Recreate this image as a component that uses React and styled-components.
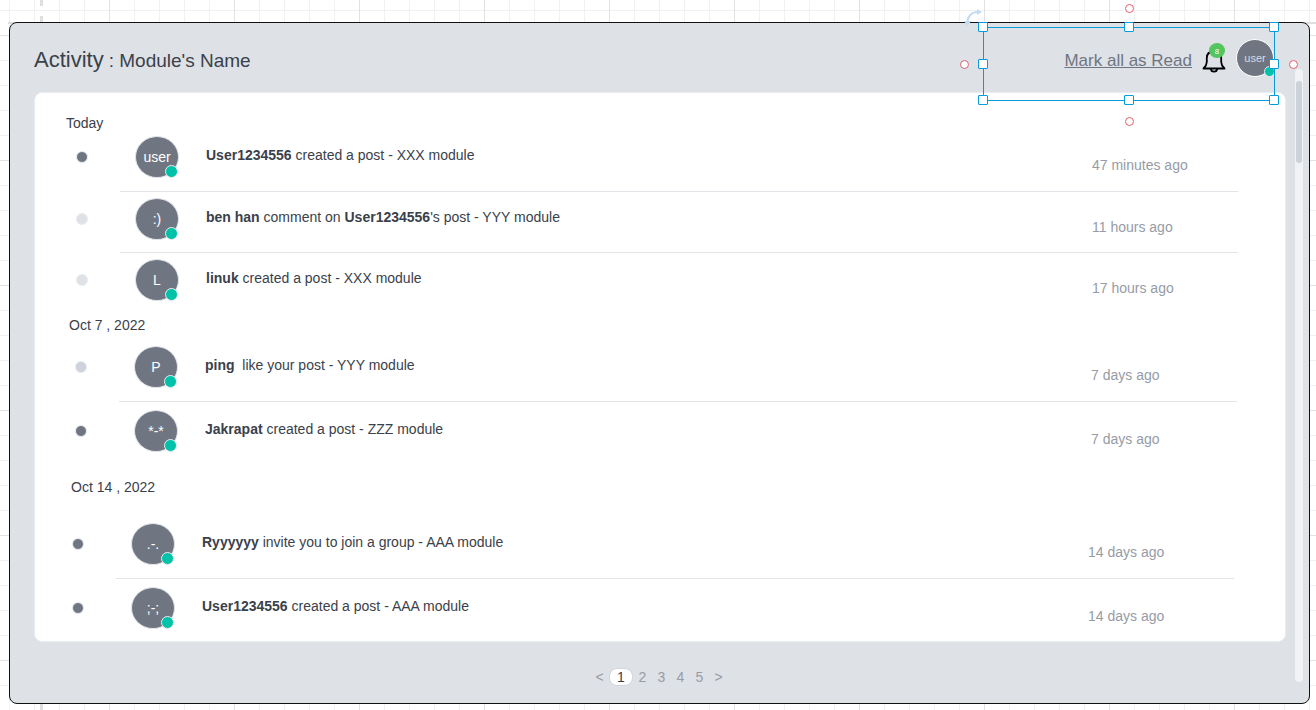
import React from "react";
import styled, { createGlobalStyle } from "styled-components";

const Global = createGlobalStyle`
  *, *::before, *::after { box-sizing: border-box; }
  body {
    margin: 0;
    background: #fff;
    color: #3a414a;
    font-family: "Liberation Sans", Arial, sans-serif;
    font-size: 14px;
    line-height: 16px;
  }
`;

const Canvas = styled.div`
  min-height: 100vh;
  padding: 22px 6px 6px 9px;
  background-color: #fff;
  background-image:
    linear-gradient(#dfdfdf, #dfdfdf),
    repeating-linear-gradient(90deg, #e2e2e2 0 1px, transparent 1px 125px),
    repeating-linear-gradient(180deg, #e2e2e2 0 1px, transparent 1px 125px),
    repeating-linear-gradient(90deg, #f1f1f1 0 1px, transparent 1px 25px),
    repeating-linear-gradient(180deg, #f1f1f1 0 1px, transparent 1px 25px);
  background-size: 100% 2px, 125px 100%, 100% 125px, 25px 100%, 100% 25px;
  background-position: 8px 22px, 109px 0, 0 35px, 9px 0, 0 10px;
  background-repeat: no-repeat, repeat, repeat, repeat, repeat;
  position: relative;
  display: flex;
`;

const MarginGuide = styled.div`
  position: absolute;
  top: 0;
  bottom: 0;
  left: 40px;
  width: 3px;
  background: repeating-linear-gradient(180deg, #dfdfdf 0 6px, transparent 6px 16px);
`;

const Window = styled.main`
  position: relative;
  flex: 1;
  display: flex;
  border: 1px solid #111;
  border-radius: 8px;
  background: #dee1e6;
  padding: 0 6px 0 24px;
`;

const Main = styled.div`
  flex: 1;
  min-width: 0;
`;

const Header = styled.header`
  height: 69px;
  display: flex;
  justify-content: space-between;
  padding: 16px 12px 0 0;
`;

const Heading = styled.h1`
  margin: 0;
  padding-top: 8px;
  font-size: 22px;
  line-height: 26px;
  font-weight: 400;
  white-space: nowrap;
`;

const ModuleName = styled.span`
  font-size: 19px;
  margin-left: 5px;
`;

const Actions = styled.div`
  display: flex;
  align-items: flex-start;
`;

const MarkRead = styled.a`
  margin: 12px 10px 0 0;
  font-size: 17px;
  line-height: 20px;
  color: #6f7682;
  text-decoration: underline;
`;

const BellButton = styled.button`
  position: relative;
  width: 24px;
  height: 32px;
  margin: 4px 10px 0 0;
  padding: 0;
  border: 0;
  background: none;
  svg { display: block; }
`;

const Count = styled.span`
  position: absolute;
  left: 7px;
  top: 0;
  width: 16px;
  height: 15px;
  border-radius: 50%;
  background: #54c45e;
  color: #fff;
  font-size: 8px;
  line-height: 17px;
  text-align: center;
`;

const Avatar = styled.span`
  position: relative;
  display: flex;
  align-items: center;
  justify-content: center;
  width: ${(p) => (p.$small ? 38 : 44)}px;
  height: ${(p) => (p.$small ? 38 : 42)}px;
  border: 1px solid ${(p) => (p.$small ? "#fff" : "#e1e4e9")};
  border-radius: 50%;
  background: #6f7682;
  color: ${(p) => (p.$small ? "#d8dbe0" : "#fff")};
  font-size: ${(p) => (p.$small ? 11 : 14)}px;

  &::after {
    content: "";
    position: absolute;
    right: ${(p) => (p.$small ? -2 : 0)}px;
    bottom: -1px;
    width: ${(p) => (p.$small ? 11 : 13)}px;
    height: ${(p) => (p.$small ? 11 : 13)}px;
    border: 1px solid #e9ecef;
    border-radius: 50%;
    background: #00c2a9;
  }
`;

const Panel = styled.section`
  border: 1px solid #e9ecf0;
  border-radius: 8px;
  background: #fff;
  padding: 22px 51px 8px 31px;
`;

const GroupTitle = styled.h2`
  margin: 0;
  padding-left: ${(p) => p.$indent}px;
  font-size: 14px;
  line-height: 16px;
  font-weight: 400;
`;

const List = styled.ul`
  list-style: none;
  margin: 0 -${(p) => p.$indent}px 0 ${(p) => p.$indent}px;
  padding: ${(p) => p.$top}px 0 0;
`;

const Item = styled.li`
  display: grid;
  grid-template-columns: 50px 15px 71px 1fr 146px;
  height: ${(p) => p.$height}px;

  &:not(:first-child) {
    padding-top: ${(p) => p.$rowGap}px;
  }

  &:not(:last-child)::after {
    content: "";
    grid-column: 2 / -1;
    height: 1px;
    align-self: end;
    background: #e1e4e8;
  }
`;

const Dot = styled.span`
  width: 12px;
  height: 12px;
  margin: 15px 0 0 6px;
  border: 1px solid #e9ecf0;
  border-radius: 50%;
  background: ${(p) => p.$color};
`;

const Face = styled.div`
  grid-column: 3;
`;

const Message = styled.p`
  margin: 11px 0 0;
  white-space: pre;
`;

const Time = styled.time`
  margin-top: 21px;
  color: #969ca6;
  white-space: nowrap;
`;

const Pager = styled.nav`
  display: flex;
  justify-content: center;
  align-items: center;
  padding: 26px 2px 16px 0;
`;

const PageButton = styled.button`
  width: ${(p) => (p.$current ? 24 : 19)}px;
  height: 18px;
  padding: 0;
  border: ${(p) => (p.$current ? "1px solid #d0d5dd" : "0")};
  border-radius: 8px;
  background: ${(p) => (p.$current ? "#fff" : "none")};
  color: ${(p) => (p.$current ? "#3a414a" : "#969ca6")};
  font: 14px/16px "Liberation Sans", Arial, sans-serif;
`;

const ScrollTrack = styled.div`
  width: 8px;
  margin: 46px 0 21px 9px;
  padding-top: 12px;
  border-radius: 4px;
  background: #f0f2f5;
`;

const ScrollThumb = styled.div`
  width: 6px;
  height: 82px;
  margin: 0 auto;
  border-radius: 3px;
  background: #ccd2da;
`;

const Selection = styled.div`
  position: absolute;
  top: 4px;
  right: 34px;
  width: 292px;
  height: 74px;
  border: 1px solid #099cdb;
  pointer-events: none;
`;

const Handle = styled.i`
  position: absolute;
  left: ${(p) => p.$x};
  top: ${(p) => p.$y};
  width: 10px;
  height: 10px;
  margin: -5px;
  border: 1px solid #099cdb;
  border-radius: 1px;
  background: #fff;
`;

const Connector = styled.i`
  position: absolute;
  left: ${(p) => p.$x};
  top: ${(p) => p.$y};
  width: 9px;
  height: 9px;
  margin: -5px -4px;
  border: 1px solid #e0616f;
  border-radius: 50%;
  background: #fff;
`;

const Rotate = styled.svg`
  position: absolute;
  left: -20px;
  top: -20px;
`;

const DARK = "#6f7682";
const LIGHT = "#dee1e6";
const MUTED = "#cdd2db";

const groups = [
  {
    title: "Today", titleIndent: 0, indent: 4, top: 5, rowGap: 6,
    items: [
      { face: "user", dot: DARK, text: <><b>User1234556</b> created a post - XXX module</>, time: "47 minutes ago", height: 56 },
      { face: ":)", dot: LIGHT, text: <><b>ben han</b> comment on <b>User1234556</b>'s post - YYY module</>, time: "11 hours ago", height: 61 },
      { face: "L", dot: LIGHT, text: <><b>linuk</b> created a post - XXX module</>, time: "17 hours ago", height: 64 },
    ],
  },
  {
    title: "Oct 7 , 2022", titleIndent: 3, indent: 3, top: 13, rowGap: 8,
    items: [
      { face: "P", dot: MUTED, text: <><b>ping</b>{"  like your post - YYY module"}</>, time: "7 days ago", height: 56 },
      { face: "*-*", dot: DARK, text: <><b>Jakrapat</b> created a post - ZZZ module</>, time: "7 days ago", height: 77 },
    ],
  },
  {
    title: "Oct 14 , 2022", titleIndent: 5, indent: 0, top: 28, rowGap: 8,
    items: [
      { face: ".-.", dot: DARK, text: <><b>Ryyyyyy</b> invite you to join a group - AAA module</>, time: "14 days ago", height: 56 },
      { face: ";-;", dot: DARK, text: <><b>User1234556</b> created a post - AAA module</>, time: "14 days ago", height: 54 },
    ],
  },
];

const handles = [
  ["-1px", "-1px"], ["50%", "-1px"], ["100%", "-1px"],
  ["-1px", "50%"], ["100%", "50%"],
  ["-1px", "100%"], ["50%", "100%"], ["100%", "100%"],
];

const connectors = [
  ["50%", "-19px"], ["-20px", "37px"], ["calc(100% + 19px)", "37px"], ["50%", "calc(100% + 22px)"],
];

export default function App() {
  return (
    <Canvas>
      <Global />
      <MarginGuide />
      <Window>
        <Main>
          <Header>
            <Heading>Activity<ModuleName>: Module's Name</ModuleName></Heading>
            <Actions>
              <MarkRead href="#read">Mark all as Read</MarkRead>
              <BellButton aria-label="Notifications">
                <svg width="24" height="32" viewBox="0 0 24 32" fill="none" stroke="#000" strokeWidth="1.8">
                  <path d="M1.500 25.500 C3.500 23.500 4.800 22 4.800 19 V15 C4.800 11 7.500 8.500 12 8.500 C16.500 8.500 19.200 11 19.200 15 V19 C19.200 22 20.500 23.500 22.500 25.500 Z" strokeLinejoin="round" />
                  <path d="M9 26 C9 29.500 15 29.500 15 26" />
                </svg>
                <Count>8</Count>
              </BellButton>
              <Avatar $small>user</Avatar>
            </Actions>
          </Header>
          <Panel>
            {groups.map((g) => (
              <section key={g.title}>
                <GroupTitle $indent={g.titleIndent}>{g.title}</GroupTitle>
                <List $indent={g.indent} $top={g.top}>
                  {g.items.map((it) => (
                    <Item key={it.face} $height={it.height} $rowGap={g.rowGap}>
                      <Dot $color={it.dot} />
                      <Face><Avatar>{it.face}</Avatar></Face>
                      <Message>{it.text}</Message>
                      <Time>{it.time}</Time>
                    </Item>
                  ))}
                </List>
              </section>
            ))}
          </Panel>
          <Pager aria-label="Pages">
            <PageButton aria-label="Previous page">&lt;</PageButton>
            <PageButton $current aria-current="page">1</PageButton>
            {[2, 3, 4, 5].map((n) => <PageButton key={n}>{n}</PageButton>)}
            <PageButton aria-label="Next page">&gt;</PageButton>
          </Pager>
        </Main>
        <ScrollTrack><ScrollThumb /></ScrollTrack>
        <Selection>
          {handles.map(([x, y]) => <Handle key={x + y} $x={x} $y={y} />)}
          {connectors.map(([x, y]) => <Connector key={x + y} $x={x} $y={y} />)}
          <Rotate width="20" height="20" viewBox="0 0 20 20" fill="none" stroke="#c3dcf5" strokeWidth="2">
            <path d="M3.500 14 C3.500 8 8 4 14 4" />
            <path d="M13 1 L18 4 L13 7 Z M0 13 L7 13 L3.500 18 Z" fill="#c3dcf5" stroke="none" />
          </Rotate>
        </Selection>
      </Window>
    </Canvas>
  );
}
